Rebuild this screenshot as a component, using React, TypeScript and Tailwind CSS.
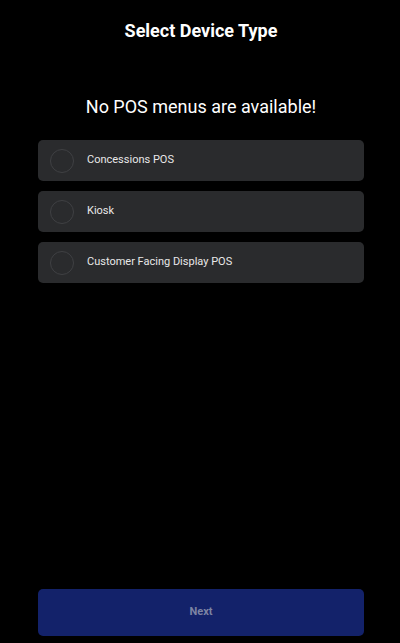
const options = ['Concessions POS', 'Kiosk', 'Customer Facing Display POS'];

export default function App() {
  return (
    <div
      className="w-[400px] h-[643px] bg-black flex flex-col pl-[38px] pr-[36px] pt-[20px] pb-[7px]"
      style={{ fontFamily: 'Roboto, "Liberation Sans", sans-serif' }}
    >
      <h1 className="text-center text-white font-bold text-[18px] leading-[22px]">
        Select Device Type
      </h1>

      <p className="text-center text-white text-[18px] leading-[24px] mt-[53px]">
        No POS menus are available!
      </p>

      <div className="flex flex-col gap-[10px] mt-[21px]">
        {options.map((label) => (
          <div
            key={label}
            className="h-[41px] rounded-[5px] bg-[#2a2b2d] flex items-center pl-[12px] gap-[13px]"
          >
            <div className="w-[24px] h-[24px] rounded-full border border-[#3f4043] shrink-0" />
            <span className="text-[11px] text-[#e8e8e8]">{label}</span>
          </div>
        ))}
      </div>

      <div className="flex-1" />

      <button className="h-[47px] rounded-[5px] bg-[#13226a] text-[#7d84a3] text-[11px] font-bold">
        Next
      </button>
    </div>
  );
}
